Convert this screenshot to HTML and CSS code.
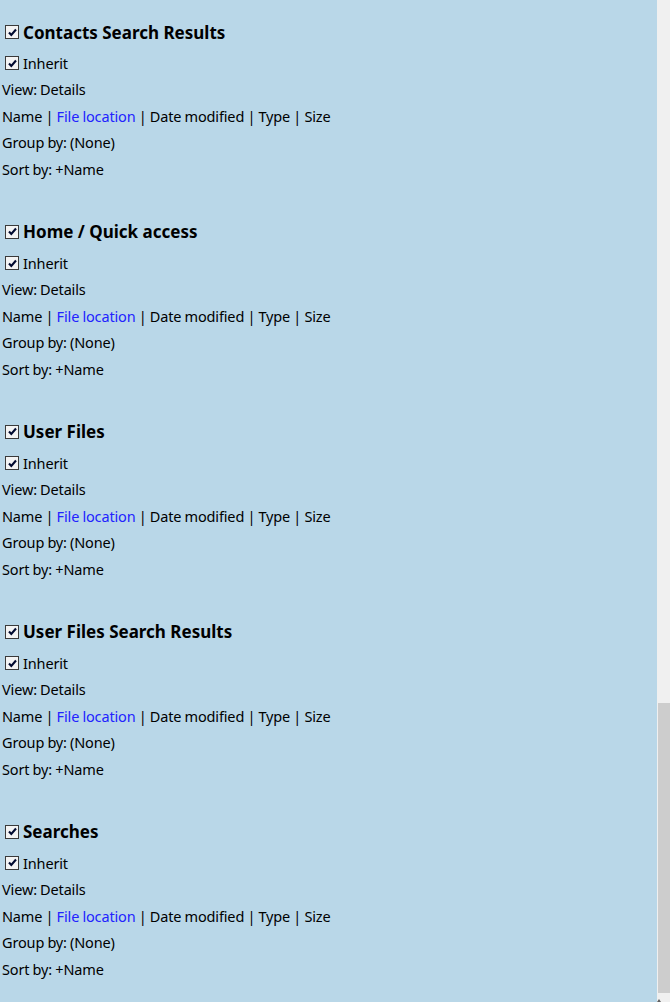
FILE: index.html
```html
<!DOCTYPE html>
<html>
<head>
<meta charset="utf-8">
<link rel="stylesheet" href="styles.css">
</head>
<body>
<div class="window">
  <main class="content">
    <section class="section">
      <h2 class="heading"><span class="cb"><svg viewBox="0 0 11 11"><path d="M2 5.5 L4.3 8 L9 2.5" /></svg></span>Contacts Search Results</h2>
      <div class="row inherit"><span class="cb"><svg viewBox="0 0 11 11"><path d="M2 5.5 L4.3 8 L9 2.5" /></svg></span>Inherit</div>
      <div class="row">View: Details</div>
      <div class="row">Name | <span class="link">File location</span> | Date modified | Type | Size</div>
      <div class="row">Group by: (None)</div>
      <div class="row">Sort by: +Name</div>
    </section>
    <section class="section">
      <h2 class="heading"><span class="cb"><svg viewBox="0 0 11 11"><path d="M2 5.5 L4.3 8 L9 2.5" /></svg></span>Home / Quick access</h2>
      <div class="row inherit"><span class="cb"><svg viewBox="0 0 11 11"><path d="M2 5.5 L4.3 8 L9 2.5" /></svg></span>Inherit</div>
      <div class="row">View: Details</div>
      <div class="row">Name | <span class="link">File location</span> | Date modified | Type | Size</div>
      <div class="row">Group by: (None)</div>
      <div class="row">Sort by: +Name</div>
    </section>
    <section class="section">
      <h2 class="heading"><span class="cb"><svg viewBox="0 0 11 11"><path d="M2 5.5 L4.3 8 L9 2.5" /></svg></span>User Files</h2>
      <div class="row inherit"><span class="cb"><svg viewBox="0 0 11 11"><path d="M2 5.5 L4.3 8 L9 2.5" /></svg></span>Inherit</div>
      <div class="row">View: Details</div>
      <div class="row">Name | <span class="link">File location</span> | Date modified | Type | Size</div>
      <div class="row">Group by: (None)</div>
      <div class="row">Sort by: +Name</div>
    </section>
    <section class="section">
      <h2 class="heading"><span class="cb"><svg viewBox="0 0 11 11"><path d="M2 5.5 L4.3 8 L9 2.5" /></svg></span>User Files Search Results</h2>
      <div class="row inherit"><span class="cb"><svg viewBox="0 0 11 11"><path d="M2 5.5 L4.3 8 L9 2.5" /></svg></span>Inherit</div>
      <div class="row">View: Details</div>
      <div class="row">Name | <span class="link">File location</span> | Date modified | Type | Size</div>
      <div class="row">Group by: (None)</div>
      <div class="row">Sort by: +Name</div>
    </section>
    <section class="section">
      <h2 class="heading"><span class="cb"><svg viewBox="0 0 11 11"><path d="M2 5.5 L4.3 8 L9 2.5" /></svg></span>Searches</h2>
      <div class="row inherit"><span class="cb"><svg viewBox="0 0 11 11"><path d="M2 5.5 L4.3 8 L9 2.5" /></svg></span>Inherit</div>
      <div class="row">View: Details</div>
      <div class="row">Name | <span class="link">File location</span> | Date modified | Type | Size</div>
      <div class="row">Group by: (None)</div>
      <div class="row">Sort by: +Name</div>
    </section>
  </main>
  <div class="scrollbar">
    <div class="thumb"></div>
    <div class="arrow"></div>
  </div>
</div>
</body>
</html>
```

FILE: styles.css
```css
html, body {
  margin: 0;
  padding: 0;
  height: 100%;
  overflow: hidden;
}
body {
  background: #b9d7e8;
  font-family: "Noto Sans", "Open Sans", sans-serif;
  color: #000;
}
.window {
  display: flex;
  height: 1002px;
}
.content {
  flex: 1;
  padding-top: 18px;
  overflow: hidden;
}
.section {
  margin-bottom: 35.7px;
}
.heading {
  margin: 0 0 3.8px 0;
  display: flex;
  align-items: center;
  height: 28px;
  font-size: 17px;
  font-weight: bold;
  padding-left: 5px;
}
.row {
  height: 26.5px;
  line-height: 26.5px;
  font-size: 14.5px;
  letter-spacing: -0.15px;
  word-spacing: -0.4px;
  padding-left: 2px;
  white-space: nowrap;
}
.row.inherit {
  display: flex;
  align-items: center;
  padding-left: 5px;
}
.cb {
  box-sizing: border-box;
  width: 14px;
  height: 14px;
  border: 1px solid #3a3a3a;
  background: #f3f3f3;
  margin-right: 4px;
  display: inline-flex;
  align-items: center;
  justify-content: center;
  flex: none;
}
.cb svg {
  width: 11px;
  height: 11px;
}
.cb path {
  fill: none;
  stroke: #000a30;
  stroke-width: 2.1;
}
.link {
  color: #2222ff;
}
.scrollbar {
  width: 13px;
  background: #f0f0f0;
  display: flex;
  flex-direction: column;
  align-items: flex-end;
}
.thumb {
  width: 12px;
  height: 290px;
  margin-top: 703px;
  background: #cdcdcd;
}
.arrow {
  margin-top: 6px;
  margin-right: 9px;
  width: 0;
  height: 0;
  border-left: 2px solid transparent;
  border-right: 2px solid transparent;
  border-bottom: 3px solid #606060;
}
```
